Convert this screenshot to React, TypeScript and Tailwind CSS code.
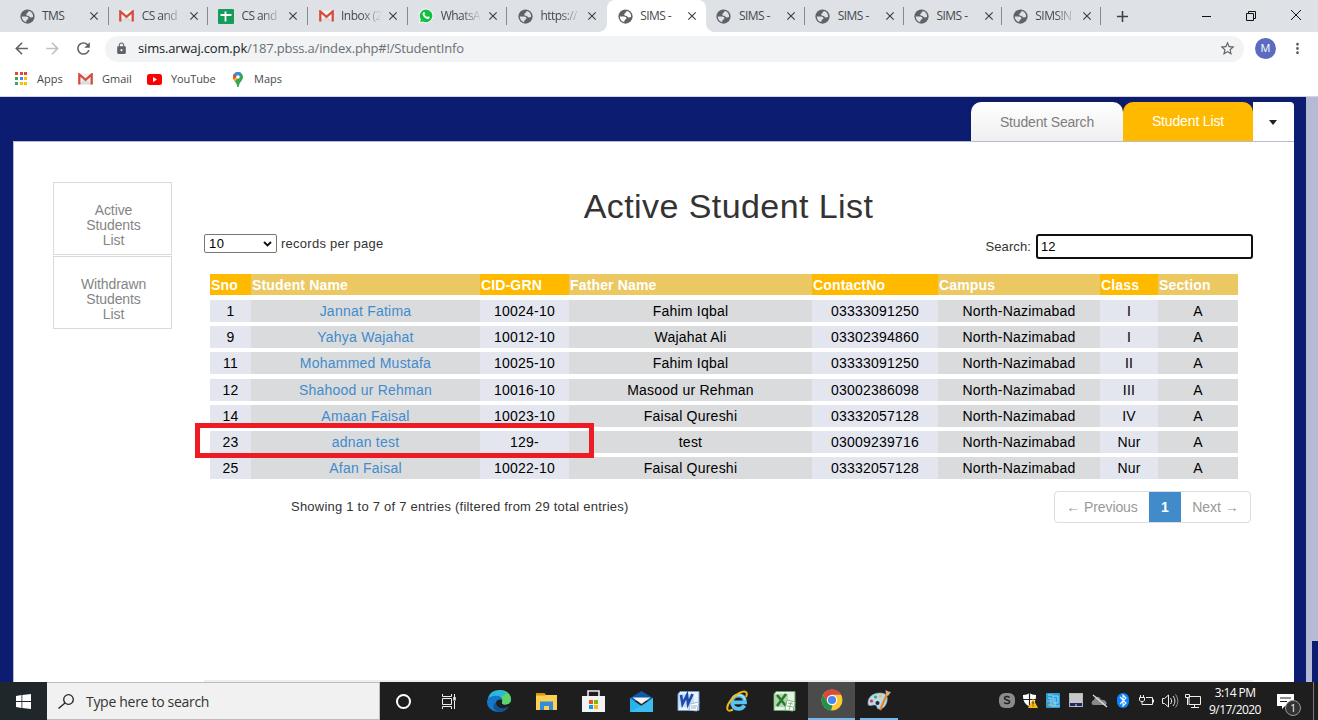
import React from "react";
import { MdArrowBack, MdArrowForward, MdRefresh, MdLock, MdStarBorder, MdMoreVert, MdClose, MdAdd } from "react-icons/md";

const ui = "font-['Open_Sans','Noto_Sans',sans-serif]";

function GlobeIcon({ hole }: { hole: string }) {
  return (
    <svg width="15" height="15" viewBox="0 0 16 16">
      <circle cx="8" cy="8" r="7.6" fill="#5f6368" />
      <path d="M14 8.300c-1.500 1.200-3.500 1-4.100-.2C9.400 7.200 7 7.600 6.600 6.200 6.300 5 8 4.700 8.300 3.700c.2-.9 1.200-1.500 2.200-1.200 2 .9 3.500 3 3.500 5.800z" fill={hole} />
      <path d="M1.900 8h4.400c1.800 0 2.900 1 2.700 2.100-.2 1-1.700 1-1.900 2-.2.900-.2 1.600-1 1.700C3.500 13 1.900 10.700 1.900 8z" fill={hole} />
    </svg>
  );
}

function GmailIcon() {
  return (
    <svg width="15" height="12" viewBox="0 0 15 12">
      <rect x="1" y="0.500" width="13" height="11" fill="#f2f2f2" />
      <path d="M1 11.500 7 6h1l6 5.500z" fill="#dcdcdc" />
      <path d="M1.300 11.500V1.500L7.500 6.800l6.200-5.300v10" fill="none" stroke="#d54b3d" strokeWidth="2.300" />
    </svg>
  );
}

function SheetsIcon() {
  return (
    <svg width="16" height="15" viewBox="0 0 16 15">
      <rect width="16" height="15" rx="1" fill="#149c5a" />
      <path d="M2.500 6h11M7.500 2.500v10" stroke="#fff" strokeWidth="1.800" />
    </svg>
  );
}

function WhatsAppIcon() {
  return (
    <svg width="16" height="16" viewBox="0 0 16 16">
      <path d="M8.200.5a7.300 7.300 0 1 1-3.500 13.800L.6 15.500l1.200-4A7.300 7.300 0 0 1 8.200.5z" fill="#fff" />
      <path d="M8.200 1.400a6.400 6.400 0 1 1-3.300 12L2 14.200l.8-2.800a6.400 6.400 0 0 1 5.400-10z" fill="#12c143" />
      <path d="M5.500 4.200c.7-.5 1.100-.2 1.400.9.200.7 0 .9-.4 1.400.6 1.300 1.400 2 2.700 2.600.6-.6.8-1 1.400-.7 1.300.6 1.400.8 1 1.600-.5 1-1.800 1.200-3 .7C6.500 9.800 5.100 8.300 4.700 6.500c-.2-1 .1-1.900.8-2.300z" fill="#fff" />
    </svg>
  );
}

type Tab = { icon: "globe" | "gmail" | "sheets" | "whatsapp"; title: string; active?: boolean; divider?: boolean; fade?: boolean };

const tabs: Tab[] = [
  { icon: "globe", title: "TMS", divider: true },
  { icon: "gmail", title: "CS and", divider: true, fade: true },
  { icon: "sheets", title: "CS and", divider: true, fade: true },
  { icon: "gmail", title: "Inbox (2", divider: true, fade: true },
  { icon: "whatsapp", title: "WhatsA", divider: true, fade: true },
  { icon: "globe", title: "https://", fade: true },
  { icon: "globe", title: "SIMS -", active: true },
  { icon: "globe", title: "SIMS -", divider: true },
  { icon: "globe", title: "SIMS -", divider: true },
  { icon: "globe", title: "SIMS -", divider: true },
  { icon: "globe", title: "SIMS!N", divider: true, fade: true },
];

function Favicon({ tab }: { tab: Tab }) {
  if (tab.icon === "gmail") return <GmailIcon />;
  if (tab.icon === "sheets") return <SheetsIcon />;
  if (tab.icon === "whatsapp") return <WhatsAppIcon />;
  return <GlobeIcon hole={tab.active ? "#fff" : "#dee1e6"} />;
}

function BrowserTab({ tab, wide }: { tab: Tab; wide: boolean }) {
  return (
    <div className={`relative flex h-8 shrink-0 items-center pl-[11px] ${wide ? "w-[99.700px]" : "w-[98.800px]"} ${tab.active ? "rounded-t-lg bg-white" : ""}`}>
      {tab.active && (
        <>
          <span className="absolute bottom-0 -left-2 h-2 w-2 bg-[radial-gradient(circle_at_0_0,#dee1e6_7.500px,#fff_8px)]" />
          <span className="absolute -right-2 bottom-0 h-2 w-2 bg-[radial-gradient(circle_at_100%_0,#dee1e6_7.500px,#fff_8px)]" />
        </>
      )}
      <span className="-ml-px flex w-4 justify-center"><Favicon tab={tab} /></span>
      <span className={`ml-[7px] w-[41px] text-[12px] tracking-[-0.550px] whitespace-nowrap text-[#45494d] ${tab.fade ? "[mask-image:linear-gradient(to_right,#000_50%,transparent)]" : ""}`}>
        {tab.title}
      </span>
      <MdClose className="ml-[4px] text-[#3c4043]" size={14} />
      {tab.divider && <span className="absolute top-[7px] right-0 h-[18px] w-px bg-[#85888c]" />}
    </div>
  );
}

function TabStrip() {
  return (
    <div className="flex h-8 items-center bg-[#dee1e6] pl-[9px]">
      {tabs.map((t, i) => <BrowserTab key={i} tab={t} wide={i < 6} />)}
      <MdAdd className="ml-3 text-[#3c4043]" size={19} />
      <svg className="ml-[70px]" width="100" height="14" viewBox="0 0 100 14" fill="none" stroke="#111">
        <path d="M0 7.500h9" />
        <path d="M44.500 4.500h7v7h-7zM46.500 4.500v-2h7v7h-2" />
        <path d="m89 1 10 10M99 1 89 11" />
      </svg>
    </div>
  );
}

function Toolbar() {
  return (
    <div className="flex h-8 items-center bg-white">
      <MdArrowBack className="ml-3 text-[#5f6368]" size={19} />
      <MdArrowForward className="ml-[12px] text-[#bdc1c6]" size={19} />
      <MdRefresh className="ml-[12px] text-[#5f6368]" size={19} />
      <div className="ml-[12px] mt-px flex h-[26px] w-[1139px] items-center rounded-full bg-[#f1f3f4] pr-[8px] pl-[10px]">
        <MdLock className="text-[#5f6368]" size={13} />
        <span className="ml-[10px] grow text-[13px] tracking-[-0.170px] whitespace-nowrap text-[#6b6f73]">
          <span className="text-[#202124]">sims.arwaj.com.pk</span>/187.pbss.a/index.php#!/StudentInfo
        </span>
        <MdStarBorder className="text-[#5f6368]" size={17} />
      </div>
      <span className="ml-[11px] flex size-[21px] items-center justify-center rounded-full bg-[#5c6bc0] text-[11px] text-white">M</span>
      <MdMoreVert className="ml-[13px] text-[#5f6368]" size={17} />
    </div>
  );
}

const appDots = ["#ea4335", "#ea4335", "#ea4335", "#34a853", "#4285f4", "#fbbc05", "#34a853", "#fbbc05", "#fbbc05"];

function Bookmarks() {
  return (
    <div className="flex h-8 items-center bg-white pb-[2px] pl-[15px] text-[11px] text-[#45494d]">
      <div className="grid grid-cols-[3px_3px_3px] gap-x-[1.500px] gap-y-[2px] pb-[2px]">
        {appDots.map((c, i) => <i key={i} className="size-[3px]" style={{ background: c }} />)}
      </div>
      <span className="ml-[10px] w-[41px]">Apps</span>
      <GmailIcon />
      <span className="ml-[9px] w-[45px]">Gmail</span>
      <svg width="15" height="11" viewBox="0 0 15 11"><rect width="15" height="11" rx="2.500" fill="#f00" /><path d="m6 3 4 2.500L6 8z" fill="#fff" /></svg>
      <span className="ml-[9px] w-[61px] tracking-[-0.100px]">YouTube</span>
      <svg width="12" height="15" viewBox="0 0 12 15">
        <path d="M6 0a5 5 0 0 1 5 5c0 3.500-3.800 5-4.300 10H5.300C4.800 10 1 8.500 1 5a5 5 0 0 1 5-5z" fill="#34a853" />
        <path d="M1.900 2.200 6 5.500l-3.200 4C1.800 8 1 7 1 5c0-1.200.3-2 .9-2.800z" fill="#fbbc05" />
        <path d="M6 0C4.300 0 2.800.8 1.900 2.100L5 5l4.200-3.900A5 5 0 0 0 6 0z" fill="#4285f4" />
        <path d="m1.900 2.100 2.800 2.500-2.900 3C1 6 .7 3.700 1.900 2.100z" fill="#ea4335" />
        <circle cx="6" cy="5" r="1.800" fill="#fff" />
      </svg>
      <span className="ml-[10px]">Maps</span>
    </div>
  );
}

const columns = ["Sno", "Student Name", "CID-GRN", "Father Name", "ContactNo", "Campus", "Class", "Section"];

const students = [
  { gap: "mt-[5px] h-[22px]", cells: ["1", "Jannat Fatima", "10024-10", "Fahim Iqbal", "03333091250", "North-Nazimabad", "I", "A"] },
  { gap: "mt-1 h-[22px]", cells: ["9", "Yahya Wajahat", "10012-10", "Wajahat Ali", "03302394860", "North-Nazimabad", "I", "A"] },
  { gap: "mt-1 h-[22px]", cells: ["11", "Mohammed Mustafa", "10025-10", "Fahim Iqbal", "03333091250", "North-Nazimabad", "II", "A"] },
  { gap: "mt-[5px] h-[21px]", cells: ["12", "Shahood ur Rehman", "10016-10", "Masood ur Rehman", "03002386098", "North-Nazimabad", "III", "A"] },
  { gap: "mt-[5px] h-[22px]", cells: ["14", "Amaan Faisal", "10023-10", "Faisal Qureshi", "03332057128", "North-Nazimabad", "IV", "A"] },
  { gap: "mt-1 h-[22px]", cells: ["23", "adnan test", "129-", "test", "03009239716", "North-Nazimabad", "Nur", "A"] },
  { gap: "mt-1 h-[22px]", cells: ["25", "Afan Faisal", "10022-10", "Faisal Qureshi", "03332057128", "North-Nazimabad", "Nur", "A"] },
];

const grid = "grid grid-cols-[41px_229px_89px_243px_126px_162px_58px_80px]";

function StudentTable() {
  return (
    <div className="relative mt-[15px] ml-[6px] w-[1028px]">
      <div className={`${grid} h-[21px] text-sm leading-[22px] font-bold tracking-[0.150px] text-white`}>
        {columns.map((c, i) => <div key={c} className={`h-[21px] pl-px ${i % 2 ? "bg-[#ecc863]" : "bg-[#ffba00]"}`}>{c}</div>)}
      </div>
      {students.map((s, r) => (
        <div key={r} className={`${grid} ${s.gap} text-center text-sm leading-[22px] tracking-[0.230px] text-black`}>
          {s.cells.map((c, i) => (
            <div key={i} className={`h-full ${i % 2 ? "bg-[#dadbdd]" : "bg-[#e3e6ef]"} ${i === 1 ? "text-[#428bca]" : ""}`}>{c}</div>
          ))}
        </div>
      ))}
      <div className="absolute top-[149px] -left-[15px] h-[35px] w-[399px] border-[5px] border-[#ed1c24]" />
    </div>
  );
}

function StudentPage() {
  return (
    <div className="flex h-[586px] border-t border-[#d5d6da] bg-[#0c1c71] pl-[13px] font-['Liberation_Sans',Arial,sans-serif]">
      <div className="flex w-[1281px] flex-col">
        <div className="flex h-[44px] items-end justify-end">
          <div className="flex h-[39px] w-[152px] items-center justify-center rounded-t-[10px] bg-gradient-to-b from-white to-[#efefef] text-sm text-[#7d7d7d] shadow-[2px_1px_4px_#222]">
            <span className="pt-px tracking-[-0.170px]">Student Search</span>
          </div>
          <div className="z-10 flex h-[39px] w-[130px] items-center justify-center rounded-t-[10px] bg-[#ffba00] pb-px text-sm tracking-[-0.150px] text-white">Student List</div>
          <div className="z-10 flex h-[39px] w-[41px] items-center justify-center rounded-tr-[4px] bg-white pt-px pr-px">
            <span className="border-x-[4.500px] border-t-[5px] border-x-transparent border-t-[#222]" />
          </div>
        </div>
        <div className="flex grow border-t border-l border-[#b8bccf] bg-white pl-[39px]">
          <nav className="mt-10 w-[119px] text-center text-sm leading-[15px] tracking-[-0.100px] text-[#858585]">
            <div className="mb-px h-[73px] border border-[#dadada] pt-[20px] pr-[23px] pl-[25px]">Active Students List</div>
            <div className="h-[73px] border border-[#dadada] pt-[20px] pr-[23px] pl-[25px]">Withdrawn Students List</div>
          </nav>
          <main className="ml-[32px] flex w-[1049px] flex-col text-[#333]">
            <h1 className="mt-[43px] text-center text-[34px] leading-[42px] tracking-[0.420px]">Active Student List</h1>
            <div className="mt-[7px] flex h-[25px] justify-between text-[13px]">
              <div className="flex h-[19px] items-center">
                <div className="flex h-[19px] w-[73px] items-center justify-between rounded-[2px] border border-[#767676] px-1 text-black">
                  <span className="tracking-[0.500px]">10</span>
                  <svg width="9" height="6" viewBox="0 0 9 6" fill="none" stroke="#111" strokeWidth="1.900"><path d="m1 1 3.500 3.500L8 1" /></svg>
                </div>
                <span className="ml-[4px] tracking-[0.260px]">records per page</span>
              </div>
              <div className="flex items-center">
                <span className="mr-[5px] tracking-[0.100px]">Search:</span>
                <div className="h-[25px] w-[217px] rounded-[3px] border-2 border-[#101010] px-[3px] leading-[22px] text-black">12</div>
              </div>
            </div>
            <StudentTable />
            <div className="mt-3 flex grow items-start justify-between pr-[2px] pl-[87px]">
              <span className="mt-[7px] text-[13px] leading-[18px] tracking-[0.230px]">Showing 1 to 7 of 7 entries (filtered from 29 total entries)</span>
              <div className="flex h-8 items-stretch overflow-hidden rounded border border-[#ddd] text-sm text-[#999]">
                <span className="flex w-[94px] items-center justify-center tracking-[-0.100px]">← Previous</span>
                <span className="-my-px flex w-[32px] items-center justify-center bg-[#428bca] font-bold text-white">1</span>
                <span className="flex w-[69px] items-center justify-center">Next →</span>
              </div>
            </div>
            <div className="h-[2px] bg-[#eee]" />
          </main>
        </div>
      </div>
      <div className="ml-3 flex w-3 items-end justify-end bg-[#b5bad5]"><div className="h-[41px] w-[6px] bg-[#0c1c71]" /></div>
    </div>
  );
}

function EdgeIcon() {
  return (
    <svg width="24" height="22" viewBox="0 0 24 22">
      <path d="M1 10C1 4 6 0 12.500 0S24 4 24 9.500c0 3-2.300 5-5.500 5-2.800 0-4-1-3.500-2 .7-1.300.4-6-5-6C5 6.500 1 10 1 14z" fill="#2fb6dd" />
      <path d="M14 .1C20 1 24 4.500 24 9.500c0 3-2.300 5-5.500 5-2.800 0-4-1-3.500-2 .8-1.400.3-3.500-1.400-4.900L20 3z" fill="#5fd568" />
      <path d="M0 12C0 8 4 5.800 9 5.800c4 0 6.500 2.200 6.500 4.700-1-1.500-6-1.500-6.500 2.500-.5 4 4 7 9 5.500l3-1.500C19 20.500 16 22 12 22 5 22 0 17.500 0 12z" fill="#1478c8" />
      <path d="M9 12c-.5 5 6 8.500 12.500 4.500C19 20.500 16 22 12 22c-5-1-8-6-3-10z" fill="#125195" />
    </svg>
  );
}

function FolderIcon() {
  return (
    <svg width="22" height="19" viewBox="0 0 22 19">
      <path d="M0 1h8l2 2h11v15H0z" fill="#fccf52" /><path d="M0 1h8l1.500 2.500H0z" fill="#dd9505" />
      <path d="M4 18V9.500h13V18h-4v-4H8v4z" fill="#318ddc" />
    </svg>
  );
}

function StoreIcon() {
  return (
    <svg width="23" height="22" viewBox="0 0 23 22">
      <path d="M6 7V1h11v6" fill="none" stroke="#eee" strokeWidth="1.600" /><path d="M0 6h23v16H0z" fill="#f2f2f2" />
      <path d="M7 10h4v4H7z" fill="#f05022" /><path d="M12 10h4v4h-4z" fill="#7db902" /><path d="M7 15h4v4H7z" fill="#00a2ed" /><path d="M12 15h4v4h-4z" fill="#ffb902" />
    </svg>
  );
}

function MailIcon() {
  return (
    <svg width="23" height="21" viewBox="0 0 23 21">
      <path d="M0 7 11.500 0 23 7v3H0z" fill="#0d5ba8" />
      <path d="M0 7l11.500 8L23 7v14H0z" fill="#28b2ec" /><path d="m0 21 16-9.500L23 7v14z" fill="#49c4f4" opacity=".6" />
      <path d="M2.500 6.500h18L11.500 13z" fill="#f4f4f4" />
    </svg>
  );
}

function WordIcon() {
  return (
    <svg width="23" height="21" viewBox="0 0 23 21">
      <path d="M3 .5h19v19H1V3z" fill="#eaf3fc" stroke="#6e9dd3" />
      <path d="M2 3h15v13H1z" fill="#bfd9f3" opacity=".8" />
      <path d="m4 4 1.500 9L10 4l1 9 4.500-10" fill="none" stroke="#1d4bab" strokeWidth="2.600" />
      <path d="m13 13 9-2-2 9-8-1z" fill="#fff" stroke="#9cb9dc" /><path d="M14 15h6M14 17h5" stroke="#8caed8" />
    </svg>
  );
}

function ExcelIcon() {
  return (
    <svg width="23" height="21" viewBox="0 0 23 21">
      <path d="M3 .5h19v19H1V3z" fill="#e5f2e3" stroke="#62a065" />
      <path d="M2 3h13v13H1z" fill="#b2d6aa" />
      <path d="m4 4 9 11M13 3 4 15" stroke="#237b33" strokeWidth="2.600" />
      <path d="m14 9 8 2-2 9-8-1z" fill="#fff" stroke="#83b886" /><path d="m15 12 5 1m-6 2 6 1m-2-5-2 8" stroke="#83b886" />
    </svg>
  );
}

function ExplorerIcon() {
  return (
    <svg width="23" height="22" viewBox="0 0 23 22">
      <path d="M18.500 15.500c-1.200 2-3.500 3.300-6 3.300-4 0-6.500-2.800-6.500-6.800s2.500-6.500 6.500-6.500 6.500 2.300 6.500 6.800H7.500" fill="none" stroke="#5bc3f3" strokeWidth="3.800" />
      <path d="M19 10c-.6-3-3-5-6.500-5S6.500 7 5.500 10" fill="none" stroke="#a6e2fb" strokeWidth="1.300" />
      <path d="M20 7C22.500 1 18.500.5 13.500 3 6.500 6.500 0 15 1.500 19.500c.8 2 3.500 1 5.500 0" fill="none" stroke="#f2b90f" strokeWidth="2" />
    </svg>
  );
}

function ChromeIcon() {
  return (
    <svg width="22" height="22" viewBox="0 0 22 22">
      <circle cx="11" cy="11" r="10.500" fill="#fcc934" />
      <path d="M1.900 5.700A10.500 10.500 0 0 1 20.100 5.700H11L6.400 13.600z" fill="#da4a3e" />
      <path d="M1.900 5.700 6.500 13.600l5 2.400-1.500 5.500A10.500 10.500 0 0 1 1.900 5.700z" fill="#21924c" />
      <circle cx="11" cy="11" r="5.200" fill="#fff" /><circle cx="11" cy="11" r="4.100" fill="#4a86f0" />
    </svg>
  );
}

function PaintIcon() {
  return (
    <svg width="25" height="22" viewBox="0 0 25 22">
      <path d="M1 14C1 8 6 4 13 4c6 0 8 3 7 8s-4 8-8 8c-3 0-1-4-4-4-4 0-7 2-7-2z" fill="#b8d9ee" stroke="#8fb4cf" strokeWidth=".6" />
      <circle cx="4.500" cy="12" r="1.600" fill="#d93a2c" /><circle cx="8.500" cy="8" r="1.600" fill="#3fae49" /><circle cx="13.500" cy="7" r="1.600" fill="#f1c232" /><circle cx="10.500" cy="14" r="2" fill="#2a2a2a" />
      <path d="m13 21 7-16" stroke="#e3892b" strokeWidth="2.300" /><path d="m19 6-.5-5 3 1.500L24 3l-3 4z" fill="#d7b082" />
    </svg>
  );
}

function TrayIcons() {
  return (
    <svg className="ml-[78px]" width="204" height="20" viewBox="0 0 204 20" fill="none">
      <rect x="0" y="2" width="16" height="15" rx="6" fill="#8b8b8b" />
      <path d="M10.500 6.500C9 5 5.500 5.200 5.500 7.300c0 2.300 5.200 1.300 5.200 3.500 0 2.400-4 2.200-5.500.7" stroke="#222" strokeWidth="1.500" />
      <path d="M24 4c3 0 5-.8 6.500-2 1.500 1.200 3.500 2 6.500 2 0 6-1.500 9-6.500 11.500C25.500 13 24 10 24 4z" fill="#fff" />
      <path d="M30.500 2v13M24 8.500h13" stroke="#222" strokeWidth="1.200" />
      <path d="m34 7.500 5 9.500H29z" fill="#fdb813" /><path d="M34 10.500v3M34 14.500v1" stroke="#222" />
      <rect x="47" y="2" width="14" height="15" rx="1" fill="#2b9ddd" />
      <path d="M49 4h5M49 7h3v8h9M54 5h5v7h-5zM56 7v8" stroke="#9bdcf6" />
      <path d="M49 14h6M48 10h4" stroke="#d9b766" />
      <rect x="70.500" y="2.500" width="13" height="13" fill="#1e2763" stroke="#b6b6b6" /><rect x="71" y="3" width="12" height="9" fill="#c8c8c8" /><path d="M77 13v3" stroke="#ddd" />
      <path d="M94 14c-2.500-1-1-5 1-5 1-4.500 6-4 7 0 4-1 7 3 5 5z" fill="#898989" /><path d="m94 4 14 12" stroke="#e5e5e5" strokeWidth="1.200" />
      <rect x="118" y="2" width="12" height="15" rx="6" fill="#0a84ff" /><path d="m121 6 6 6-3 3V4l3 3-6 6" stroke="#fff" strokeWidth="1.100" />
      <path d="M147 6.500h6.500v7H144M154.500 8.500v3M141.500 4v2.500m3-2.500v2.500M140.500 6.500h5v2.500c0 1-1 1.500-2.500 1.500s-2.500-.5-2.500-1.500zM143 10.500v3h2" stroke="#eee" />
      <path d="M163.500 7.500h2l4-3.500v12l-4-3.500h-2zM171.500 7c1.500 2 1.500 4 0 6M174 5c2.500 3 2.500 7 0 10" stroke="#eee" />
      <path d="M176.500 3.500c3 4 3 9 0 13" stroke="#999" />
      <path d="M190 5.500h11.500v8H190zM195.500 13.500v3M192 16.500h8M186.500 3.500h4v3h-4zM188.500 7v7" stroke="#eee" />
    </svg>
  );
}

function Taskbar() {
  return (
    <div className="flex h-[38px] bg-[#1e1e1e] text-white">
      <div className="flex w-[47px] items-center justify-center bg-[#20272b]">
        <svg width="15" height="15" viewBox="0 0 15 15" fill="#fff"><path d="M0 2 5.500 1v6H0zM6.300.9 15 0v7H6.300zM0 8h5.500v6L0 13zM6.300 8H15v7l-8.700-1z" /></svg>
      </div>
      <div className="flex w-[333px] items-center border border-l-0 border-[#bcbcbc] bg-[#f1f1f1] pl-[11px] text-[#333]">
        <svg width="16" height="15" viewBox="0 0 16 15" fill="none" stroke="#222" strokeWidth="1.300"><circle cx="10.500" cy="5.500" r="4.800" /><path d="M7 9 .5 14.500" /></svg>
        <span className="ml-[12px] text-[14px] tracking-[-0.300px] whitespace-nowrap">Type here to search</span>
      </div>
      <div className="flex w-[46px] items-center justify-center"><span className="size-[15px] rounded-full border-2 border-white" /></div>
      <div className="flex w-[46px] items-center justify-center">
        <svg width="16" height="15" viewBox="0 0 16 15" fill="none" stroke="#eee"><path d="M1.500 4.500h9v6h-9zM1.500 0v2.500h9V0M1.500 15v-2.500h9V15M13.500 0v3M13.500 7v8" /><path d="M13.500 3v3.500" strokeWidth="2.500" /></svg>
      </div>
      <div className="flex items-center">
        <div className="flex w-[53px] justify-center"><EdgeIcon /></div>
        <div className="flex w-[43px] justify-center"><FolderIcon /></div>
        <div className="flex w-[51px] justify-center"><StoreIcon /></div>
        <div className="flex w-[45px] justify-center"><MailIcon /></div>
        <div className="flex w-[49px] justify-center"><WordIcon /></div>
        <div className="flex w-[48px] justify-center"><ExplorerIcon /></div>
        <div className="-ml-px flex w-[48px] justify-center"><ExcelIcon /></div>
      </div>
      <div className="flex w-[47px] items-center justify-center border-b-2 border-[#76b9ed] bg-[#4b4b4b]"><ChromeIcon /></div>
      <div className="ml-[5px] flex w-[38px] items-center justify-center border-b-2 border-[#76b9ed]"><PaintIcon /></div>
      <div className="ml-[23px] flex items-center">
        <TrayIcons />
        <div className="ml-[4px] flex w-[56px] flex-col items-center text-[12px] leading-[17px] whitespace-nowrap">
          <span className="tracking-[-0.600px]">3:14 PM</span><span className="tracking-[-0.550px]">9/17/2020</span>
        </div>
        <div className="relative ml-[14px] h-[26px] w-6">
          <svg className="absolute top-[6px] left-0" width="17" height="15" viewBox="0 0 17 15"><path d="M0 0h17v12H8l-3 3v-3H0z" fill="#fff" /><path d="M3 4h11M3 7.500h7" stroke="#222" strokeWidth="1.200" /></svg>
          <span className="absolute top-[12px] left-[8px] flex size-4 items-center justify-center rounded-full border border-[#999] bg-[#333] text-[10px]">1</span>
        </div>
      </div>
      <div className="ml-auto w-[5px] border-l border-[#777]" />
    </div>
  );
}

export default function App() {
  return (
    <div className={`h-[720px] w-[1318px] overflow-hidden bg-white ${ui}`}>
      <TabStrip />
      <Toolbar />
      <Bookmarks />
      <StudentPage />
      <Taskbar />
    </div>
  );
}
